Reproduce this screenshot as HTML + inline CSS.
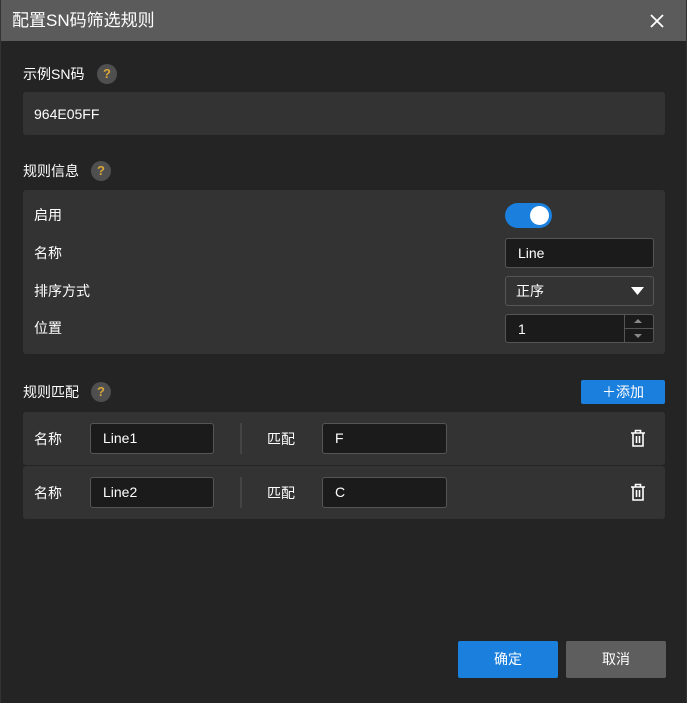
<!DOCTYPE html>
<html><head><meta charset="utf-8"><style>
*{margin:0;padding:0;box-sizing:border-box}
body{width:687px;height:703px;background:#242424;font-family:"Liberation Sans","Noto Sans CJK SC",sans-serif;color:#fff;font-size:14px;position:relative;overflow:hidden}
.a{position:absolute}
.title{left:1px;top:0;width:685px;height:41px;background:#5b5b5b}
.box{background:#333;border-radius:3px}
.lbl{font-size:14px;line-height:20px}
.q{width:20px;height:20px;border-radius:50%;background:#4f4f4f;color:#d9a63a;font-size:13px;text-align:center;line-height:20px;font-weight:bold}
.inp{background:#1b1b1b;border:1px solid #555;border-radius:3px;font-size:14px;line-height:28px;padding-left:12px}
.btn{border-radius:2px;text-align:center;font-size:14px}
</style></head><body>
<div class="a" style="left:0;top:0;width:1px;height:703px;background:#333"></div>
<div class="a" style="right:0;top:0;width:1px;height:703px;background:#333"></div>
<div class="a title"></div>
<div class="a" style="left:12px;top:9px;font-size:17px;line-height:24px">配置SN码筛选规则</div>
<svg class="a" style="left:650px;top:14px" width="14" height="14"><path d="M1 1L13 13M13 1L1 13" stroke="#fff" stroke-width="1.8"/></svg>

<div class="a lbl" style="left:23px;top:64px">示例SN码</div>
<div class="a q" style="left:97px;top:64px">?</div>
<div class="a box" style="left:23px;top:92px;width:642px;height:43px"></div>
<div class="a" style="left:34px;top:104px;line-height:20px">964E05FF</div>

<div class="a lbl" style="left:23px;top:161px">规则信息</div>
<div class="a q" style="left:91px;top:161px">?</div>
<div class="a box" style="left:23px;top:190px;width:642px;height:164px"></div>
<div class="a lbl" style="left:34px;top:205px">启用</div>
<div class="a lbl" style="left:34px;top:243px">名称</div>
<div class="a lbl" style="left:34px;top:281px">排序方式</div>
<div class="a lbl" style="left:34px;top:318px">位置</div>
<div class="a" style="left:505px;top:203px;width:47px;height:25px;border-radius:13px;background:#1a7fdd"></div>
<div class="a" style="left:530px;top:206px;width:19px;height:19px;border-radius:50%;background:#fff"></div>
<div class="a inp" style="left:505px;top:238px;width:149px;height:30px">Line</div>
<div class="a inp" style="left:505px;top:276px;width:149px;height:30px;background:#333;padding-left:10px">正序</div>
<svg class="a" style="left:631px;top:287px" width="13" height="8"><path d="M0 0H13L6.5 8Z" fill="#fff"/></svg>
<div class="a inp" style="left:505px;top:314px;width:149px;height:29px">1</div>
<div class="a" style="left:624px;top:315px;width:1px;height:27px;background:#555"></div>
<div class="a" style="left:625px;top:328px;width:28px;height:1px;background:#555"></div>
<svg class="a" style="left:634px;top:319px" width="8" height="20"><path d="M0 4L4 0L8 4Z M0 15L8 15L4 19Z" fill="#888"/></svg>

<div class="a lbl" style="left:23px;top:382px">规则匹配</div>
<div class="a q" style="left:91px;top:382px">?</div>
<div class="a btn" style="left:581px;top:380px;width:84px;height:24px;background:#1a7fdd;line-height:24px">＋添加</div>

<div class="a box" style="left:23px;top:412px;width:642px;height:53px"></div>
<div class="a box" style="left:23px;top:466px;width:642px;height:53px"></div>

<div class="a lbl" style="left:34px;top:429px">名称</div>
<div class="a inp" style="left:90px;top:423px;width:124px;height:31px">Line1</div>
<div class="a" style="left:240px;top:423px;width:2px;height:31px;background:#444"></div>
<div class="a lbl" style="left:267px;top:429px">匹配</div>
<div class="a inp" style="left:322px;top:423px;width:125px;height:31px">F</div>

<div class="a lbl" style="left:34px;top:483px">名称</div>
<div class="a inp" style="left:90px;top:477px;width:124px;height:31px">Line2</div>
<div class="a" style="left:240px;top:477px;width:2px;height:31px;background:#444"></div>
<div class="a lbl" style="left:267px;top:483px">匹配</div>
<div class="a inp" style="left:322px;top:477px;width:125px;height:31px">C</div>

<svg class="a" style="left:630px;top:429px" width="16" height="18"><path d="M1 4H15M5.5 4V1.5H10.5V4M3 4V17H13V4M6.5 7V14M9.5 7V14" stroke="#fff" stroke-width="1.6" fill="none"/></svg>
<svg class="a" style="left:630px;top:483px" width="16" height="18"><path d="M1 4H15M5.5 4V1.5H10.5V4M3 4V17H13V4M6.5 7V14M9.5 7V14" stroke="#fff" stroke-width="1.6" fill="none"/></svg>

<div class="a btn" style="left:458px;top:641px;width:100px;height:37px;background:#1a7fdd;line-height:37px">确定</div>
<div class="a btn" style="left:566px;top:641px;width:100px;height:37px;background:#5e5e5e;line-height:37px">取消</div>
</body></html>
